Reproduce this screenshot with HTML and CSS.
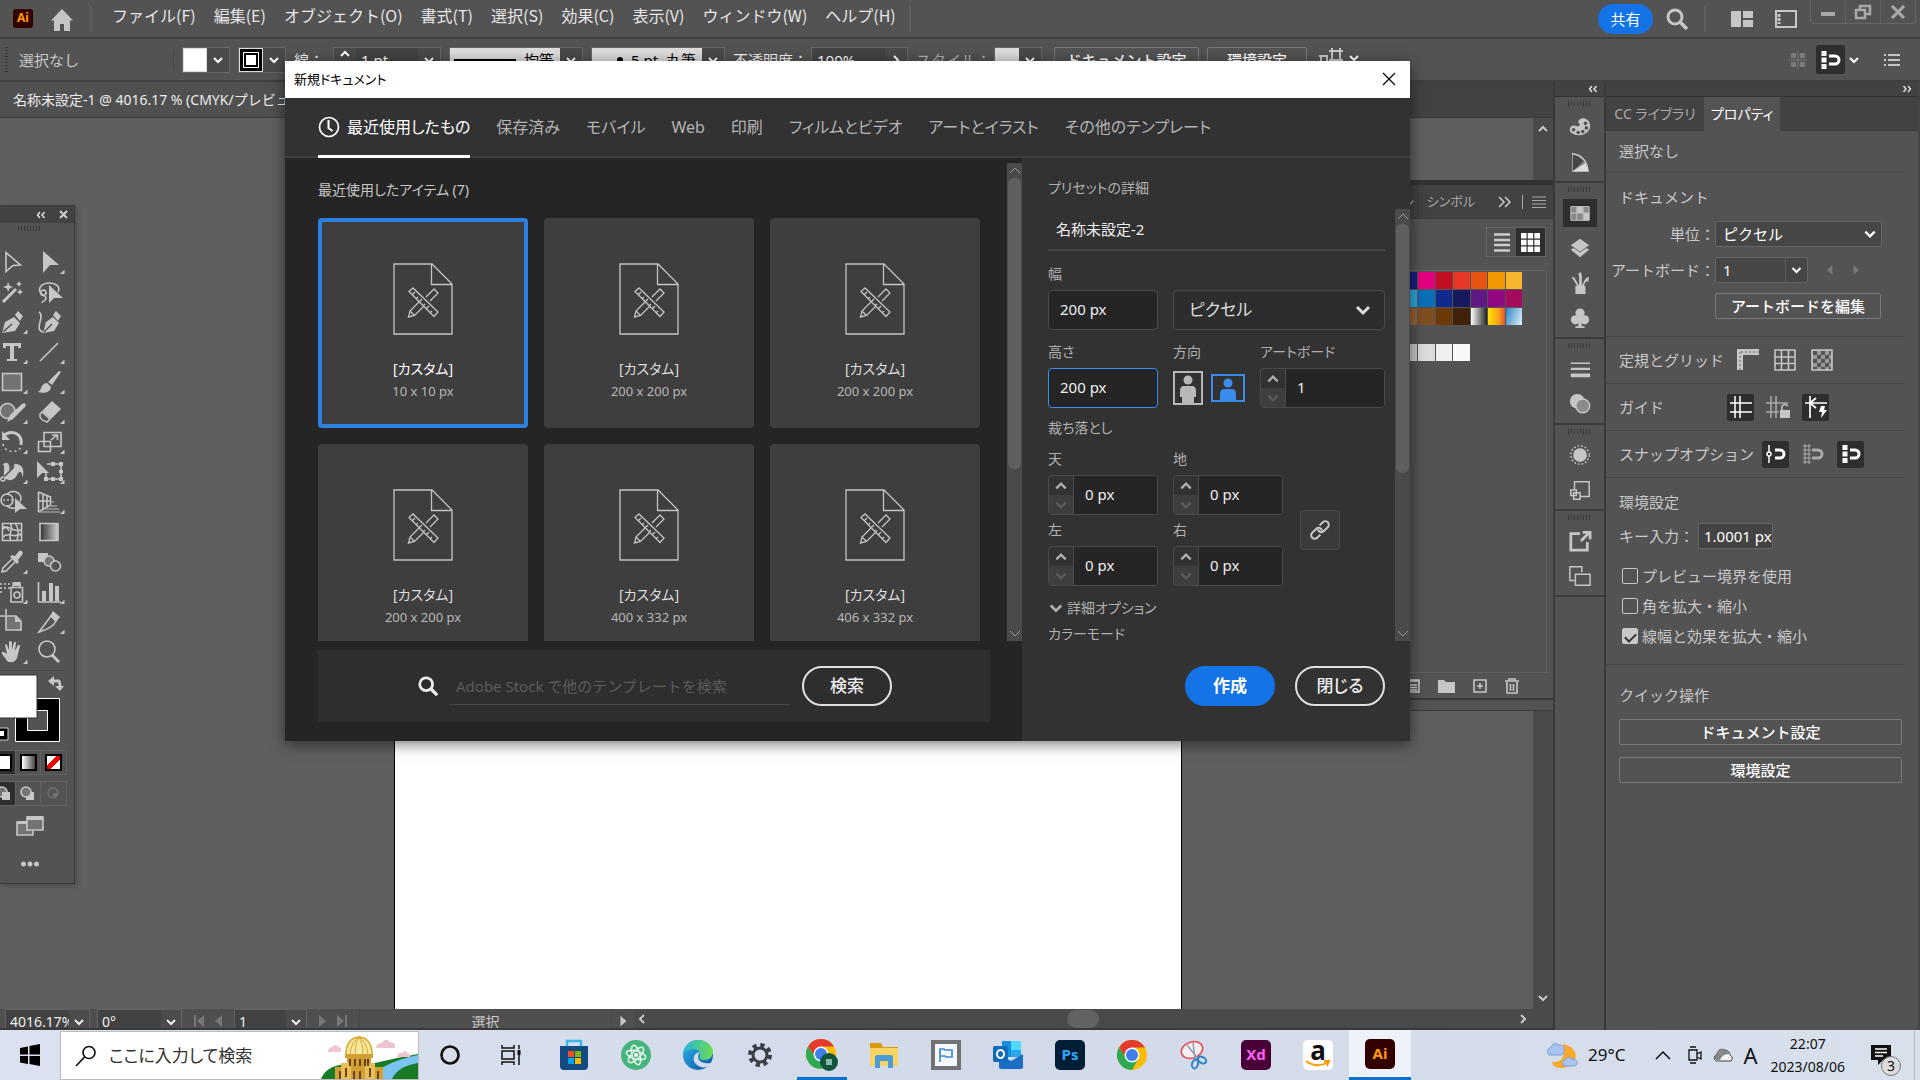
FILE: index.html
```html
<!DOCTYPE html>
<html lang="ja">
<head>
  <meta charset="UTF-8">
  <title>新規ドキュメント</title>
  <link rel="stylesheet" href="styles.css">
</head>
<body>
  <!-- 共通アイコン -->
  <svg class="defs" aria-hidden="true">
    <symbol id="chev" viewBox="0 0 12 12"><path d="M2 4l4 4 4-4" fill="none" stroke="currentColor" stroke-width="2"/></symbol>
    <symbol id="chev-up" viewBox="0 0 12 12"><path d="M2 8l4-4 4 4" fill="none" stroke="currentColor" stroke-width="2"/></symbol>
    <symbol id="thin-up" viewBox="0 0 12 12"><path d="M1 8l5-5 5 5" fill="none" stroke="currentColor"/></symbol>
    <symbol id="thin-down" viewBox="0 0 12 12"><path d="M1 4l5 5 5-5" fill="none" stroke="currentColor"/></symbol>
    <symbol id="prev" viewBox="0 0 10 14"><path d="M8 1v12L1 7z" fill="currentColor"/></symbol>
    <symbol id="next" viewBox="0 0 10 14"><path d="M2 1v12l7-6z" fill="currentColor"/></symbol>
    <symbol id="glass" viewBox="0 0 24 24"><circle cx="10" cy="10" r="7" fill="none" stroke="currentColor" stroke-width="3"/><path d="M15 15l7 7" stroke="currentColor" stroke-width="3.5"/></symbol>
    <symbol id="laquo" viewBox="0 0 10 8"><path d="M4 1L1.500 4 4 7M8.500 1L6 4l2.500 3" fill="none" stroke="currentColor" stroke-width="1.500"/></symbol>
    <symbol id="raquo" viewBox="0 0 10 8"><path d="M1.500 1L4 4 1.500 7M6 1l2.500 3L6 7" fill="none" stroke="currentColor" stroke-width="1.500"/></symbol>
    <symbol id="doc" viewBox="0 0 60 72">
      <g fill="none" stroke="#c4c4c4" stroke-width="1.300">
        <path d="M1 1h38l20 20v50H1zM38.500 1v20.500H59"/>
        <path d="M16 28.500l4-3.500 25 24-4 4.500zM19 32l3-3M23 36l2-2M26 39l3-3M30 43l2-2M33 46l3-3M37 50l2-2"/>
        <path d="M33 34l8-8 4 4-8 8M26 39l-9 9-1.500 6 6-1.500 9-9M17 48l4 4"/>
      </g>
    </symbol>
    <symbol id="chrome" viewBox="0 0 30 30">
      <circle cx="15" cy="15" r="15" fill="#fbbc05"/>
      <path d="M2 7.500A15 15 0 0 1 28 7.500H15L9 18z" fill="#e33b2e"/>
      <path d="M2 7.500A15 15 0 0 0 15 30l6.500-11.500L9 18z" fill="#2da94f"/>
      <circle cx="15" cy="15" r="7.500" fill="#fff"/><circle cx="15" cy="15" r="6" fill="#3f7fe8"/>
    </symbol>
  </svg>

  <header class="menubar">
    <span class="ai-logo">Ai</span>
    <button class="icon-btn home" aria-label="ホーム"><svg width="24" height="24" viewBox="0 0 24 24"><path d="M12 1L1 12.500h3V23h6v-7h4v7h6V12.500h3z" fill="#c6c6c6"/></svg></button>
    <i class="vline"></i>
    <nav class="menus">
      <button>ファイル(F)</button>
      <button>編集(E)</button>
      <button>オブジェクト(O)</button>
      <button>書式(T)</button>
      <button>選択(S)</button>
      <button>効果(C)</button>
      <button>表示(V)</button>
      <button>ウィンドウ(W)</button>
      <button>ヘルプ(H)</button>
    </nav>
    <i class="vline"></i>
    <div class="menubar-right">
      <button class="share">共有</button>
      <button class="icon-btn" aria-label="検索"><svg width="24" height="24"><use href="#glass"/></svg></button>
      <i class="vline"></i>
      <button class="icon-btn arrange" aria-label="ドキュメントの配置"><svg width="22" height="16" viewBox="0 0 22 16" fill="#c6c6c6"><path d="M0 0h10v16H0zM12 0h10v7H12zM12 9h10v7H12z"/></svg></button>
      <button class="icon-btn" aria-label="ワークスペース"><svg width="22" height="18" viewBox="0 0 22 18"><path d="M1 1h20v16H1z" fill="none" stroke="#c6c6c6" stroke-width="2"/><path d="M4 4v10" stroke="#c6c6c6" stroke-width="3" stroke-dasharray="3 1"/></svg></button>
      <div class="win-buttons">
        <button aria-label="最小化"><svg width="16" height="16" viewBox="0 0 16 16"><path d="M1 10h14" stroke="#a9a9a9" stroke-width="4"/></svg></button>
        <button aria-label="元に戻す"><svg width="18" height="16" viewBox="0 0 18 16"><path d="M6 5V2h10v8h-4M2 6h9v8H2z" fill="none" stroke="#a9a9a9" stroke-width="2.500"/></svg></button>
        <button aria-label="閉じる"><svg width="16" height="14" viewBox="0 0 16 14"><path d="M2 1l12 12M14 1L2 13" stroke="#a9a9a9" stroke-width="3"/></svg></button>
      </div>
    </div>
  </header>

  <div class="controlbar">
    <i class="grip-v"></i>
    <span class="sel-state">選択なし</span>
    <div class="swatch-drop"><i class="sw sw-white"></i><button aria-label="塗り"><svg><use href="#chev"/></svg></button></div>
    <div class="swatch-drop"><i class="sw sw-stroke"></i><button aria-label="線"><svg><use href="#chev"/></svg></button></div>
    <label for="strokeW" class="bar-label bright">線：</label>
    <div class="bar-field w-stroke"><button aria-label="増減"><svg><use href="#chev-up"/></svg><svg><use href="#chev"/></svg></button><input id="strokeW" value="1 pt"><button aria-label="線幅"><svg><use href="#chev"/></svg></button></div>
    <div class="bar-field w-brush"><span class="preview"><i class="line"></i>均等</span><button aria-label="プロファイル"><svg><use href="#chev"/></svg></button></div>
    <div class="bar-field w-brush"><span class="preview"><i class="dot"></i>5 pt. 丸筆</span><button aria-label="ブラシ"><svg><use href="#chev"/></svg></button></div>
    <label for="opacity" class="bar-label bright">不透明度：</label>
    <div class="bar-field w-opacity"><input id="opacity" value="100%"><button aria-label="不透明度を選ぶ"><svg class="turn"><use href="#chev"/></svg></button></div>
    <span class="bar-label">スタイル：</span>
    <div class="swatch-drop"><i class="sw sw-grey"></i><button aria-label="スタイル"><svg><use href="#chev"/></svg></button></div>
    <button class="out-btn w-docset">ドキュメント設定</button>
    <button class="out-btn w-pref">環境設定</button>
    <svg class="align-ic" viewBox="0 0 40 26" fill="none" stroke="#c6c6c6" stroke-width="2"><path d="M13 4h8v9h-8zM10 4h3M21 4h3M10 13h3M21 13h3M13 1v3M21 1v3M2 9h6v12M2 9v12M0 9h2"/><path d="M31 9l4 4 4-4" stroke="#fff"/></svg>
    <div class="bar-right">
      <svg width="18" height="18" viewBox="0 0 18 18" fill="#7a7a7a"><path d="M2 2h5v5H2zM11 2h5v5h-5zM2 11h5v5H2zM11 11h5v5h-5zM8.500 0h1v18h-1zM0 8.500h18v1H0z"/></svg>
      <div class="snap-group">
        <button class="dark-ic" aria-label="スナップ"><svg width="20" height="20" viewBox="0 0 20 20"><path d="M3 1v18" stroke="#fff" stroke-width="5" stroke-dasharray="5 1.500"/><path d="M8 6h6a4 4 0 0 1 0 8H8" fill="none" stroke="#fff" stroke-width="3"/></svg></button>
        <svg class="c12"><use href="#chev"/></svg>
      </div>
      <button class="icon-btn" aria-label="パネルメニュー"><svg width="16" height="14" viewBox="0 0 16 14"><path d="M0 2h2M0 7h2M0 12h2M4 2h12M4 7h12M4 12h12" stroke="#c6c6c6" stroke-width="2"/></svg></button>
    </div>
  </div>

  <main class="workspace">
    <section class="doc-area">
      <div class="doc-tabs"><span>名称未設定-1 @ 4016.17 % (CMYK/プレビュー)</span></div>
      <div class="canvas-row">
        <div class="canvas"><div class="artboard"></div></div>
        <div class="canvas-scroll"><svg class="c12"><use href="#chev-up"/></svg><svg class="c12"><use href="#chev"/></svg></div>
      </div>
      <div class="statusbar">
        <div class="st-field w-zoom"><input aria-label="ズーム" value="4016.17%"><button aria-label="ズームを選ぶ"><svg><use href="#chev"/></svg></button></div>
        <div class="st-field w-rot"><input aria-label="回転" value="0°"><button aria-label="回転を選ぶ"><svg><use href="#chev"/></svg></button></div>
        <svg class="nav-ic" viewBox="0 0 34 14" fill="#777"><path d="M3 1h2v12H3zM13 1v12L6 7zM31 1v12l-7-6z"/></svg>
        <div class="st-field w-page"><input aria-label="アートボード番号" value="1"><button aria-label="アートボードを選ぶ"><svg><use href="#chev"/></svg></button></div>
        <svg class="nav-ic" viewBox="0 0 34 14" fill="#777"><path d="M3 1v12l7-6zM21 1v12l7-6zM29 1h2v12h-2z"/></svg>
        <span class="st-tool">選択</span>
        <svg class="st-play"><use href="#next"/></svg>
        <div class="hscroll"><svg class="c12 turn-l"><use href="#chev"/></svg><i></i><svg class="c12 turn"><use href="#chev"/></svg></div>
      </div>

      <aside class="tools">
        <div class="tools-head"><svg width="10" height="8"><use href="#laquo"/></svg><svg width="9" height="9" viewBox="0 0 9 9"><path d="M1 1l7 7M8 1L1 8" stroke="#d0d0d0" stroke-width="2"/></svg></div>
        <i class="grip"></i>
        <div class="tool-grid">
          <button aria-label="選択"><svg viewBox="0 0 28 30"><path d="M6 5.500v19l7-6 7.500-.5z" class="ln"/></svg></button>
          <button aria-label="ダイレクト選択"><svg viewBox="0 0 28 30"><path d="M6 4v22l7-8h9z" class="fl"/><path d="M27.500 22.500V27H23z" class="fl"/></svg></button>
          <button aria-label="自動選択"><svg viewBox="0 0 28 30"><path d="M3 25L16 12" class="ln" stroke-width="3"/><path d="M8 5l1.500 3.500L13 10l-3.500 1.500L8 15l-1-3.500L3 10l4-1.500zM19 4l1 2 2 1-2 1-1 2-1-2-2-1 2-1zM20 12l1 2 2 1-2 1-1 2-1-2-2-1 2-1z" class="fl"/></svg></button>
          <button aria-label="なげなわ"><svg viewBox="0 0 28 30"><path d="M4 17c-4-6 1-11 8-11s12 4 9 9M4 17c1 3 6 1 5-2s-6-2-5 1 5 2 5 5-4 3-4 5" class="ln"/><path d="M12 8v18l5-5h9z" class="fl"/></svg></button>
          <button aria-label="ペン"><svg viewBox="0 0 28 30"><path d="M2 26l3-11 9-5 6 6-5 8zM15 8l3-4 5 5-3 5z" class="fl"/><path d="M3 25l9-8" class="cut"/><path d="M27.500 22.500V27H23z" class="fl"/></svg></button>
          <button aria-label="曲線"><svg viewBox="0 0 28 30"><path d="M2 5c7 4-6 17 4 20" class="ln"/><path d="M6 26l3-11 7-5 6 6-5 8zM16 8l3-4 5 5-3 5z" class="fl"/><path d="M7 25l8-8" class="cut"/></svg></button>
          <button aria-label="文字"><svg viewBox="0 0 28 30"><path d="M3 6h18v5h-3V9h-4v13h3v2H7v-2h3V9H6v2H3z" class="fl"/><path d="M27.500 22.500V27H23z" class="fl"/></svg></button>
          <button aria-label="直線"><svg viewBox="0 0 28 30"><path d="M3 24L21 6" class="ln"/><path d="M27.500 22.500V27H23z" class="fl"/></svg></button>
          <button aria-label="長方形"><svg viewBox="0 0 28 30"><path d="M2.500 6.500h19v17h-19z" class="ln shade"/><path d="M27.500 22.500V27H23z" class="fl"/></svg></button>
          <button aria-label="ブラシ"><svg viewBox="0 0 28 30"><path d="M22 4l2 1-9 13-4-3zM10 16l4 4c0 5-7 7-13 5 4-2 3-9 9-9z" class="fl"/><path d="M27.500 22.500V27H23z" class="fl"/></svg></button>
          <button aria-label="Shaper"><svg viewBox="0 0 28 30"><circle cx="7.500" cy="14" r="7.500" class="ln shade"/><path d="M7 25l3-7L22 7c3-2 5 1 3 3L13 22z" class="fl"/><path d="M27.500 22.500V27H23z" class="fl"/></svg></button>
          <button aria-label="消しゴム"><svg viewBox="0 0 28 30"><path d="M15 4l9 8-10 10-9-8z" class="fl"/><path d="M5 15l8 7-3 3q-8-2-7-8z" class="ln"/><path d="M27.500 22.500V27H23z" class="fl"/></svg></button>
          <button aria-label="回転"><svg viewBox="0 0 28 30"><path d="M3 9c8-7 20-3 18 9" class="ln" stroke-width="3"/><path d="M2 4v9h8z" class="fl"/><path d="M3 17c2 9 14 10 18 3" class="ln" stroke-dasharray="2 3"/><path d="M27.500 22.500V27H23z" class="fl"/></svg></button>
          <button aria-label="拡大・縮小"><svg viewBox="0 0 28 30"><path d="M7 5.500h17v14H7zM1.500 14.500h12v10h-12zM14 13l6-5M15 8h5.500v5" class="ln"/><path d="M27.500 22.500V27H23z" class="fl"/></svg></button>
          <button aria-label="線幅"><svg viewBox="0 0 28 30"><path d="M3 7c7-5 7 5 6 9 4-6 8-11 12-7 3 3 3 8 1 12 1-7-3-8-5-3s-8 7-12 3c-3-3 1-9-2-14z" class="fl"/><path d="M2 22l13-13" class="cut"/><circle cx="3" cy="22" r="2" class="ln"/><circle cx="16" cy="9" r="1.500" class="ln"/><path d="M27.500 22.500V27H23z" class="fl"/></svg></button>
          <button aria-label="自由変形"><svg viewBox="0 0 28 30"><path d="M10 7h14v15H9v-6" class="ln"/><path d="M0 4v17l5-5h7zM14 5h4v4h-4zM22 5h4v4h-4zM22 13h4v3h-4zM22 20h4v4h-4zM14 20h4v4h-4zM7 20h4v4H7z" class="fl"/><path d="M27.500 22.500V27H23z" class="fl"/></svg></button>
          <button aria-label="シェイプ形成"><svg viewBox="0 0 28 30"><circle cx="7" cy="13" r="6" class="ln"/><path d="M7 7c7-6 17 0 13 8M7 19q4 3 8 2" class="ln"/><path d="M3 13h12" class="ln" stroke-dasharray="2 2"/><path d="M15 11v15l5-4h7z" class="fl"/></svg></button>
          <button aria-label="遠近グリッド"><svg viewBox="0 0 28 30"><path d="M1.500 5v20M1.500 5l12 5v8l-12 7M6 7v15M10 8.500v11M1.500 14h12" class="ln"/><path d="M14 15h3M12 19h8M7 22h15M2 25h21" class="ln dim"/><path d="M27.500 22.500V27H23z" class="fl"/></svg></button>
          <button aria-label="メッシュ"><svg viewBox="0 0 28 30"><path d="M2.500 6.500h19v17h-19zM10 6c5 6-3 10 1 18M3 12c6-6 8 4 18 1M3 20c6-6 10 2 18-3M15 6c5 6 3 12 2 18M3 10q4-1 6 4" class="ln"/></svg></button>
          <button aria-label="グラデーション"><svg viewBox="0 0 28 30"><defs><linearGradient id="g1"><stop stop-color="#333"/><stop offset="1" stop-color="#ccc"/></linearGradient></defs><path d="M3 6.500h18v17H3z" fill="url(#g1)" stroke="#c6c6c6" stroke-width="1.600"/></svg></button>
          <button aria-label="スポイト"><svg viewBox="0 0 28 30"><path d="M15 9l4-5c3-1 5 2 3 4l-4 5 1 2-2 2-7-7 2-2z" class="fl"/><path d="M12 12l-9 9-1 4 4-1 9-9" class="ln"/><path d="M27.500 22.500V27H23z" class="fl"/></svg></button>
          <button aria-label="ブレンド"><svg viewBox="0 0 28 30"><path d="M1 6h10v9H1z" class="fl"/><circle cx="12" cy="14" r="5" class="ln shade"/><circle cx="18.500" cy="19" r="5" class="ln solid"/></svg></button>
          <button aria-label="シンボルスプレー"><svg viewBox="0 0 28 30"><path d="M0 7h10M0 11h10M0 15h4" class="ln" stroke-dasharray="2 2"/><path d="M11 10.500h11.500V25H11zM13 10V6h7v4" class="ln"/><path d="M14 5h6v4h-6z" class="fl"/><circle cx="17" cy="18" r="3" class="ln"/><path d="M27.500 22.500V27H23z" class="fl"/></svg></button>
          <button aria-label="グラフ"><svg viewBox="0 0 28 30"><path d="M1.500 5v20H24" class="ln"/><path d="M5 14h4v10H5zM12 6h4v18h-4zM18 9h4v15h-4z" class="fl"/><path d="M27.500 22.500V27H23z" class="fl"/></svg></button>
          <button aria-label="アートボード"><svg viewBox="0 0 28 30"><path d="M0 9h5M6 2v6M6 9h10l5 5v9H6z" class="ln shade"/><path d="M15 9v6h6z" class="fl"/></svg></button>
          <button aria-label="スライス"><svg viewBox="0 0 28 30"><path d="M2 25L14 9l5 5q-3 7-17 11z" class="ln"/><path d="M16 4l7 6-4 5-6-6z" class="fl"/><path d="M27.500 22.500V27H23z" class="fl"/></svg></button>
          <button aria-label="手のひら"><svg viewBox="0 0 28 30"><path d="M8 25L2 17q-1-3 2-2l3 2L5 8q1-2 2 0l2 5V5q1-2 3 0v8l2-8q2-1 2 1l-1 8 3-6q2-1 2 1l-3 12q-2 5-7 4z" class="fl"/><path d="M27.500 22.500V27H23z" class="fl"/></svg></button>
          <button aria-label="ズーム"><svg viewBox="0 0 28 30"><circle cx="10" cy="12" r="8" class="ln"/><path d="M15 18l7 7" class="ln" stroke-width="3"/></svg></button>
        </div>
        <div class="fill-stroke">
          <svg width="66" height="72" viewBox="0 0 66 72">
            <path d="M52 7h7q1 0 1 7" fill="none" stroke="#c6c6c6" stroke-width="3"/><path d="M48 7l6-5v10zM55 12h9l-4 5z" fill="#c6c6c6"/>
            <path d="M15.500 24.500h44v43h-44z" stroke="#fff" fill="#000"/><path d="M27.500 36.500h20v20h-20z" stroke="#fff" fill="#535353"/>
            <path d="M-1 1h38v43H-1z" fill="#fff" stroke="#333"/>
            <path d="M-1 54h9v12H-1z" fill="#000" stroke="#ccc"/><path d="M0 57h4v5H0z" fill="#fff"/>
          </svg>
        </div>
        <div class="mode-row">
          <button class="on" aria-label="カラー"><i class="chip"></i></button><button aria-label="グラデーション塗り"><i class="chip grad"></i></button><button aria-label="なし"><i class="chip none"></i></button>
        </div>
        <div class="mode-row draw">
          <button class="on" aria-label="標準描画"><svg width="16" height="16" viewBox="0 0 16 16"><circle cx="6" cy="6" r="5" class="ln shade"/><path d="M6 6h8v8H6z" class="fl"/></svg></button>
          <button aria-label="背面描画"><svg width="16" height="16" viewBox="0 0 16 16"><path d="M6 6h8v8H6z" class="fl"/><circle cx="6" cy="6" r="5" class="ln shade"/></svg></button>
          <button aria-label="内側描画"><svg width="16" height="16" viewBox="0 0 16 16"><circle cx="7" cy="7" r="5" fill="none" stroke="#707070" stroke-width="1.500"/><path d="M7 7h5q0 5-5 5z" fill="#707070"/></svg></button>
        </div>
        <button class="screen-mode" aria-label="スクリーンモード"><svg width="28" height="20" viewBox="0 0 28 20"><path d="M1 6h16v13H1z" class="ln shade"/><path d="M1 5h16v3H1z" class="fl"/><path d="M11 1h16v13H11z" class="ln shade"/><path d="M11 0h16v4H11z" class="fl"/></svg></button>
        <button class="more" aria-label="ツールバーを編集"><svg width="18" height="6" viewBox="0 0 18 6" fill="#c6c6c6"><circle cx="2.500" cy="3" r="2.500"/><circle cx="9" cy="3" r="2.500"/><circle cx="15.500" cy="3" r="2.500"/></svg></button>
      </aside>

      <aside class="swatches">
        <div class="sw-tabs"><span>シ</span><span class="cut-tab">シンボル</span><svg width="20" height="14" viewBox="0 0 20 14"><path d="M4 2l5 5-5 5M10 2l5 5-5 5" fill="none" stroke="#ccc" stroke-width="1.500"/></svg><i></i><svg width="14" height="12" viewBox="0 0 14 12"><path d="M0 1h14M0 4.500h14M0 8h14M0 11.500h14" stroke="#aaa"/></svg></div>
        <div class="sw-view">
          <button aria-label="リスト表示"><svg width="16" height="19" viewBox="0 0 16 19"><path d="M0 1.500h16M0 7h16M0 12h16M0 17.500h16" stroke="#ccc" stroke-width="2.500"/></svg></button><button class="on" aria-label="サムネール表示"><svg width="19" height="19" viewBox="0 0 19 19" fill="#fff"><path d="M0 0h5.500v5.500H0zM6.700 0h5.500v5.500H6.700zM13.400 0H19v5.500h-5.600zM0 6.700h5.500v5.500H0zM6.700 6.700h5.500v5.500H6.700zM13.400 6.700H19v5.500h-5.600zM0 13.400h5.500V19H0zM6.700 13.400h5.500V19H6.700zM13.400 13.400H19V19h-5.600z"/></svg></button>
        </div>
        <div class="sw-list">
          <div class="sw-grid">
            <i class="c-navy"></i><i class="c-navy"></i><i class="c-magenta"></i><i class="c-red"></i><i class="c-vermilion"></i><i class="c-orange"></i><i class="c-amber"></i><i class="c-yellow"></i>
            <i class="c-cyan"></i><i class="c-cyan"></i><i class="c-blue"></i><i class="c-royal"></i><i class="c-indigo"></i><i class="c-violet"></i><i class="c-purple"></i><i class="c-wine"></i>
            <i class="c-tan"></i><i class="c-tan"></i><i class="c-brown"></i><i class="c-umber"></i><i class="c-cocoa"></i><i class="c-bw"></i><i class="c-fire"></i><i class="c-sky"></i>
          </div>
          <div class="sw-grid greys"><i class="c-g1"></i><i class="c-g1"></i><i class="c-g2"></i><i class="c-g3"></i><i class="c-g4"></i></div>
        </div>
        <div class="sw-foot">
          <svg width="14" height="14" viewBox="0 0 14 14"><path d="M0 1h13v12H0z" class="ln"/><path d="M0 2h13M3 6h8M3 8.500h8M3 11h8" class="ln"/></svg>
          <svg width="17" height="14" viewBox="0 0 17 14"><path d="M0 1h6l2 2h9v11H0z" class="fl"/></svg>
          <svg width="14" height="14" viewBox="0 0 14 14"><path d="M1 1h12v12H1zM4 7h6M7 4v6" class="ln"/></svg>
          <svg width="14" height="16" viewBox="0 0 14 16"><path d="M0 3h14M4 3V1h6v2M2 4v11h10V4M5.500 6v7M8.500 6v7" class="ln"/></svg>
        </div>
      </aside>
    </section>

    <aside class="dock">
      <div class="dock-top"><svg width="10" height="8"><use href="#laquo"/></svg></div>
      <div class="dock-group"><i class="grip"></i>
        <button aria-label="カラー"><svg viewBox="0 0 24 24"><path d="M13 3c6-2 10 3 10 8 0 6-6 10-12 10S0 18 1 14s4-4 7-3 5-1 3-3 0-4 2-5z" class="fl"/><g fill="#535353"><circle cx="5" cy="15" r="2"/><circle cx="10" cy="18" r="2"/><circle cx="15" cy="17" r="2"/><circle cx="19" cy="13" r="2"/><circle cx="18" cy="8" r="2"/></g></svg></button>
        <button aria-label="カラーガイド"><svg viewBox="0 0 24 24"><path d="M4 3q15 2 17 19H4z" fill="#888" stroke="#c6c6c6" stroke-width="1.500"/><path d="M4 22V4l6 2zM4 22l6-16 6 5z" fill="#444"/><path d="M4 22l14-9 3 9z" fill="#ddd"/></svg></button>
      </div>
      <div class="dock-group"><i class="grip"></i>
        <button class="on" aria-label="スウォッチ"><svg viewBox="0 0 24 24"><path d="M2 5h20v15H2z" fill="#888"/><path d="M9 5h6v7H9zM16 12h6v8h-6z" fill="#c6c6c6"/><path d="M2 5h20v15H2zM2 12h20M8.500 5v15M15.500 5v15" fill="none" stroke="#c6c6c6"/></svg></button>
        <button aria-label="レイヤー"><svg viewBox="0 0 24 24"><path d="M12 2l10 7-10 7L2 9zM2 14l3-2 7 5 7-5 3 2-10 8z" class="fl"/></svg></button>
        <button aria-label="ブラシ"><svg viewBox="0 0 24 24"><path d="M7 15h11v9H7zM9 15L3 6q2-2 4 2l4 7M11 15V4l-1-2 3-2 1 4v11M14 15l3-6q2-4 5-3l-1 4-3 1-2 4" class="fl"/></svg></button>
        <button aria-label="シンボル"><svg viewBox="0 0 24 24"><g class="fl"><circle cx="12" cy="6.500" r="5"/><circle cx="7" cy="14" r="5"/><circle cx="17" cy="14" r="5"/><path d="M11 10h2l1 11h3v2H7v-2h3z"/></g></svg></button>
      </div>
      <div class="dock-group"><i class="grip"></i>
        <button aria-label="線"><svg viewBox="0 0 24 24"><path d="M2 5h21v1.500H2zM2 10.500h21v2.500H2zM2 17h21v4H2z" class="fl"/></svg></button>
        <button aria-label="透明"><svg viewBox="0 0 24 24"><circle cx="9" cy="9" r="8" class="fl"/><circle cx="15" cy="14" r="7.500" fill="#8a8a8a" stroke="#c6c6c6" stroke-width="1.500"/></svg></button>
      </div>
      <div class="dock-group"><i class="grip"></i>
        <button aria-label="アピアランス"><svg viewBox="0 0 24 24"><circle cx="12" cy="12" r="7.500" class="fl"/><circle cx="12" cy="12" r="10" fill="none" stroke="#c6c6c6" stroke-width="1.500" stroke-dasharray="2 2"/></svg></button>
        <button aria-label="グラフィックスタイル"><svg viewBox="0 0 24 24"><path d="M6 11V3h16v16h-9M2 12h6v6H2zM5 15h7v7H5z" class="ln"/></svg></button>
      </div>
      <div class="dock-group"><i class="grip"></i>
        <button aria-label="アセットの書き出し"><svg viewBox="0 0 24 24"><path d="M12 4H2v18h18V13M13 12l9-9M15 2.500h8V10" fill="none" stroke="#c6c6c6" stroke-width="3"/></svg></button>
        <button aria-label="アートボード"><svg viewBox="0 0 24 24"><path d="M6 17H1V2h13v6M7 10h16v12H7z" class="ln"/></svg></button>
      </div>
    </aside>

    <aside class="props">
      <div class="props-top"><svg width="10" height="8"><use href="#raquo"/></svg></div>
      <div class="props-tabs"><button>CC ライブラリ</button><button class="on">プロパティ</button></div>
      <div class="props-row r-state">選択なし</div>
      <section class="props-doc">
        <h3>ドキュメント</h3>
        <div class="form-row">
          <label for="unit">単位：</label>
          <span class="select w-unit"><select id="unit"><option>ピクセル</option></select><svg><use href="#chev"/></svg></span>
        </div>
        <div class="form-row">
          <label for="board">アートボード：</label>
          <span class="select w-board"><select id="board"><option>1</option></select><svg><use href="#chev"/></svg></span>
          <svg class="step"><use href="#prev"/></svg><svg class="step"><use href="#next"/></svg>
        </div>
        <div class="form-row"><span class="lab"></span><button class="out-btn w-edit">アートボードを編集</button></div>
      </section>
      <div class="props-row rulers"><span>定規とグリッド</span>
        <svg width="22" height="22" viewBox="0 0 22 22"><path d="M0 0h22v6H6v15H0z" class="fl"/><path d="M3 3v18M4 3h18" stroke="#666" stroke-dasharray="2 2" fill="none"/></svg>
        <svg width="22" height="22" viewBox="0 0 22 22"><path d="M1 1h20v20H1zM1 8h20M1 14.500h20M7.500 1v20M14.500 1v20" class="ln"/></svg>
        <svg width="22" height="22" viewBox="0 0 22 22"><path d="M1 1h20v20H1z" fill="#999"/><path d="M2 4h18M2 12h18M2 20h18" stroke="#555" stroke-width="4" stroke-dasharray="4 4"/><path d="M6 8h14M6 16h14" stroke="#555" stroke-width="4" stroke-dasharray="4 4"/><path d="M1 1h20v20H1z" class="ln"/></svg>
      </div>
      <div class="props-row guides"><span>ガイド</span>
        <button class="dark-ic sm" aria-label="ガイドを表示"><svg width="22" height="22" viewBox="0 0 22 22"><path d="M5 0v22M10 0v22M0 7h22M0 16h22" stroke="#fff" stroke-width="1.500"/></svg></button>
        <button class="plain-ic" aria-label="ガイドをロック"><svg width="24" height="22" viewBox="0 0 24 22"><path d="M5 0v22M10 0v22M0 7h22M0 16h13" stroke="#aaa" stroke-width="1.500"/><path d="M14 14h10v8H14z" fill="#c6c6c6"/><path d="M16 14v-4q3-3 6 0" fill="none" stroke="#c6c6c6" stroke-width="1.500"/></svg></button>
        <button class="dark-ic sm" aria-label="スマートガイド"><svg width="22" height="22" viewBox="0 0 22 22"><path d="M5 0v22M0 7h22M5 7l6-5M5 7l6 5" stroke="#fff" stroke-width="1.700"/><path d="M16 10h4l-1 4h3l-6 8 1-6h-3z" fill="#fff"/></svg></button>
      </div>
      <div class="props-row snaps"><span>スナップオプション</span>
        <button class="dark-ic sm" aria-label="ポイントにスナップ"><svg width="22" height="20" viewBox="0 0 22 20" fill="none" stroke="#fff"><path d="M4 1v18" stroke-width="1.500"/><circle cx="4" cy="10" r="2" fill="#333" stroke-width="1.500"/><path d="M10 6h5a4 4 0 0 1 0 8h-5" stroke-width="3"/></svg></button>
        <button class="plain-ic" aria-label="グリッドにスナップ"><svg width="22" height="20" viewBox="0 0 22 20" fill="none" stroke="#aaa"><path d="M3 0v20M7 0v20M1 2h8M1 6h8M1 10h8M1 14h8M1 18h8"/><path d="M10 6h6a4 4 0 0 1 0 8h-6" stroke-width="3"/></svg></button>
        <button class="dark-ic sm" aria-label="ピクセルにスナップ"><svg width="20" height="20" viewBox="0 0 20 20"><path d="M4 1v18" stroke="#fff" stroke-width="5" stroke-dasharray="5 1.500"/><path d="M9 6h5a4 4 0 0 1 0 8H9" fill="none" stroke="#fff" stroke-width="3"/></svg></button>
      </div>
      <section class="props-pref">
        <h3>環境設定</h3>
        <div class="key-row"><label for="key">キー入力：</label><input id="key" value="1.0001 px"></div>
        <label class="check"><input type="checkbox">プレビュー境界を使用</label>
        <label class="check"><input type="checkbox">角を拡大・縮小</label>
        <label class="check"><input type="checkbox" checked>線幅と効果を拡大・縮小</label>
      </section>
      <section class="props-quick">
        <h3>クイック操作</h3>
        <button class="out-btn">ドキュメント設定</button>
        <button class="out-btn">環境設定</button>
      </section>
    </aside>
  </main>

  <!-- 新規ドキュメント ダイアログ -->
  <div class="dialog" role="dialog" aria-labelledby="dlgTitle">
    <div class="dlg-title"><span id="dlgTitle">新規ドキュメント</span><button aria-label="ダイアログを閉じる"><svg width="14" height="14" viewBox="0 0 14 14"><path d="M1 1l12 12M13 1L1 13" stroke="#000" stroke-width="1.200"/></svg></button></div>
    <nav class="dlg-tabs">
      <button class="on"><svg width="22" height="22" viewBox="0 0 22 22"><circle cx="11" cy="11" r="9.500" fill="none" stroke="#fff" stroke-width="1.700"/><path d="M10.500 4v8l4 3" fill="none" stroke="#fff" stroke-width="2"/></svg>最近使用したもの</button>
      <button>保存済み</button>
      <button>モバイル</button>
      <button>Web</button>
      <button>印刷</button>
      <button>フィルムとビデオ</button>
      <button>アートとイラスト</button>
      <button>その他のテンプレート</button>
    </nav>
    <div class="dlg-body">
      <div class="recent">
        <div class="recent-scroll">
          <div class="recent-main">
            <h2>最近使用したアイテム (7)</h2>
            <div class="cards">
              <button class="card on"><svg><use href="#doc"/></svg><b>[カスタム]</b><span>10 x 10 px</span></button>
              <button class="card"><svg><use href="#doc"/></svg><b>[カスタム]</b><span>200 x 200 px</span></button>
              <button class="card"><svg><use href="#doc"/></svg><b>[カスタム]</b><span>200 x 200 px</span></button>
              <button class="card"><svg><use href="#doc"/></svg><b>[カスタム]</b><span>200 x 200 px</span></button>
              <button class="card"><svg><use href="#doc"/></svg><b>[カスタム]</b><span>400 x 332 px</span></button>
              <button class="card"><svg><use href="#doc"/></svg><b>[カスタム]</b><span>406 x 332 px</span></button>
            </div>
          </div>
          <div class="vscroll"><svg class="c12"><use href="#thin-up"/></svg><i class="thumb-l"></i><svg class="c12"><use href="#thin-down"/></svg></div>
        </div>
        <form class="stock">
          <svg width="22" height="22"><use href="#glass"/></svg>
          <input aria-label="Adobe Stock を検索" placeholder="Adobe Stock で他のテンプレートを検索">
          <button type="button" class="pill">検索</button>
        </form>
      </div>
      <div class="preset">
        <h2>プリセットの詳細</h2>
        <div class="preset-scroll">
          <div class="fields">
            <input class="doc-name" aria-label="名前" value="名称未設定-2">
            <label class="fl-label" for="w">幅</label>
            <div class="frow">
              <input id="w" class="box" value="200 px">
              <span class="select dlg-select"><select aria-label="単位"><option>ピクセル</option></select><svg><use href="#chev"/></svg></span>
            </div>
            <div class="frow three">
              <div><label class="fl-label" for="h">高さ</label><input id="h" class="box focus" value="200 px"></div>
              <div><span class="fl-label">方向</span>
                <div class="orient">
                  <button aria-label="縦向き"><svg width="30" height="34" viewBox="0 0 30 34"><path d="M1 1h28v32H1z" fill="#323232" stroke="#b8b8b8" stroke-width="2"/><circle cx="15" cy="9" r="4.500" fill="#b8b8b8"/><path d="M7 20q0-5 4-5h8q4 0 4 5v6h-2v7H9v-7H7z" fill="#b8b8b8"/></svg></button>
                  <button aria-label="横向き"><svg width="34" height="28" viewBox="0 0 34 28"><path d="M1 1h32v26H1z" fill="#323232" stroke="#3b8ded" stroke-width="2"/><circle cx="17" cy="9" r="4.500" fill="#3b8ded"/><path d="M9 27v-7q0-5 5-5h6q5 0 5 5v7z" fill="#3b8ded"/></svg></button>
                </div>
              </div>
              <div><label class="fl-label" for="n">アートボード</label><div class="spin wide"><span><button aria-label="増やす"><svg><use href="#chev-up"/></svg></button><button disabled aria-label="減らす"><svg><use href="#chev"/></svg></button></span><input id="n" value="1"></div></div>
            </div>
            <h4>裁ち落とし</h4>
            <div class="bleed">
              <div class="bleed-grid">
                <div><label class="fl-label" for="b1">天</label><div class="spin"><span><button aria-label="増やす"><svg><use href="#chev-up"/></svg></button><button disabled aria-label="減らす"><svg><use href="#chev"/></svg></button></span><input id="b1" value="0 px"></div></div>
                <div><label class="fl-label" for="b2">地</label><div class="spin"><span><button aria-label="増やす"><svg><use href="#chev-up"/></svg></button><button disabled aria-label="減らす"><svg><use href="#chev"/></svg></button></span><input id="b2" value="0 px"></div></div>
                <div><label class="fl-label" for="b3">左</label><div class="spin"><span><button aria-label="増やす"><svg><use href="#chev-up"/></svg></button><button disabled aria-label="減らす"><svg><use href="#chev"/></svg></button></span><input id="b3" value="0 px"></div></div>
                <div><label class="fl-label" for="b4">右</label><div class="spin"><span><button aria-label="増やす"><svg><use href="#chev-up"/></svg></button><button disabled aria-label="減らす"><svg><use href="#chev"/></svg></button></span><input id="b4" value="0 px"></div></div>
              </div>
              <button class="link" aria-label="リンク"><svg width="24" height="24" viewBox="0 0 24 24" fill="none" stroke="#c8c8c8" stroke-width="2"><g transform="rotate(-45 12 12)"><path d="M9 15.500H4.500a3.500 3.500 0 0 1 0-7H10a3.500 3.500 0 0 1 3 5.500"/><path d="M15 8.500h4.500a3.500 3.500 0 0 1 0 7H14a3.500 3.500 0 0 1-3-5.500"/></g></svg></button>
            </div>
            <button class="advanced"><svg><use href="#chev"/></svg>詳細オプション</button>
            <div class="fl-label">カラーモード</div>
          </div>
          <div class="vscroll"><svg class="c12"><use href="#thin-up"/></svg><i class="thumb-r"></i><svg class="c12"><use href="#thin-down"/></svg></div>
        </div>
        <div class="dlg-foot"><button class="pill primary">作成</button><button class="pill">閉じる</button></div>
      </div>
    </div>
  </div>

  <footer class="taskbar">
    <button class="start" aria-label="スタート"><svg width="22" height="22" viewBox="0 0 22 22"><path d="M1 4l8-1.500v8H1zM10.500 2L21 0v10.500H10.500zM1 12h8v8l-8-1.500zM10.500 12H21v10l-10.500-2z"/></svg></button>
    <label class="tsearch">
      <svg width="22" height="22" viewBox="0 0 22 22"><circle cx="14" cy="7.500" r="6" fill="none" stroke="#111" stroke-width="1.700"/><path d="M9.500 12L1 21" stroke="#111" stroke-width="1.700"/></svg>
      <input placeholder="ここに入力して検索">
      <svg class="dome" width="97" height="44" viewBox="0 0 97 44">
        <path d="M0 44q5-13 24-15l30-1q20-5 43-9v25z" fill="#187a24"/><path d="M48 44q14-17 49-24v8q-20 3-26 16z" fill="#7cc4f0"/>
        <path d="M55 13q0-5 6-5 3-6 8-1 6 0 5 6zM7 17q0-5 5-5 3-4 5 0 4 0 3 5zM76 22q1-5 5-4 4-4 5 0 4 0 3 4z" fill="#ecc5d0"/>
        <path d="M25 20q0-17 13-18 13 1 13 18z" fill="#f7e8a0" stroke="#d9a72c" stroke-width="1.500"/><path d="M29 20q1-13 9-18 8 5 9 18M34 20q0-12 4-18 4 6 4 18" fill="none" stroke="#d9a72c"/>
        <path d="M24 19h28v4H24zM26 23h24v10H26zM14 32h48v12H14z" fill="#d2a032"/><path d="M20 28h10v16H20zM44 28h10v16H44z" fill="#e8bf57"/><path d="M29 24v7M34 24v7M39 24v7M44 24v7M47 24v7M19 36v8M25 33v9M33 36v8M39 36v8M49 33v9M57 36v8" stroke="#6a4212" stroke-width="2"/>
      </svg>
    </label>
    <nav class="apps">
      <button aria-label="Cortana"><svg width="22" height="22" viewBox="0 0 22 22"><circle cx="11" cy="11" r="8.500" fill="none" stroke="#111" stroke-width="2.700"/></svg></button>
      <button aria-label="タスクビュー"><svg width="22" height="20" viewBox="0 0 22 20" fill="none" stroke="#111" stroke-width="1.500"><path d="M1 6h12v8H1zM1 0v3h12V0M1 20v-3h12v3M18 0v4M18 9v11"/><path d="M18 5v5" stroke-width="3"/></svg></button>
      <button aria-label="Microsoft Store"><svg width="30" height="32" viewBox="0 0 30 32"><path d="M1 7h28v20q0 4-4 4H5q-4 0-4-4z" fill="#144a82"/><path d="M8 7V2h14v5" fill="none" stroke="#38b6e8" stroke-width="2.500"/><path d="M9 12h6v6H9z" fill="#f25022"/><path d="M16 12h6v6h-6z" fill="#7fba00"/><path d="M9 19h6v6H9z" fill="#00a4ef"/><path d="M16 19h6v6h-6z" fill="#ffb900"/></svg></button>
      <button aria-label="Atom"><svg width="30" height="30" viewBox="0 0 30 30"><circle cx="15" cy="15" r="15" fill="#46b57d"/><g fill="none" stroke="#e4f7e9" stroke-width="1.500"><ellipse cx="15" cy="15" rx="10" ry="4" transform="rotate(15 15 15)"/><ellipse cx="15" cy="15" rx="10" ry="4" transform="rotate(75 15 15)"/><ellipse cx="15" cy="15" rx="10" ry="4" transform="rotate(135 15 15)"/></g><circle cx="15" cy="15" r="2" fill="#fff"/></svg></button>
      <button aria-label="Edge"><svg width="30" height="30" viewBox="0 0 30 30"><defs><linearGradient id="eg" y2="1"><stop stop-color="#2bb5e8"/><stop offset="1" stop-color="#0b53a8"/></linearGradient><linearGradient id="eg2"><stop stop-color="#25b4dc"/><stop offset="1" stop-color="#6bdc50"/></linearGradient></defs><circle cx="15" cy="15" r="15" fill="url(#eg)"/><path d="M0 13C2 4 8 0 15 0c9 0 15 6 15 12 0 5-4 8-9 8-4 0-5-2-4-4 2-8-10-9-17-3z" fill="url(#eg2)"/><path d="M17 12c-5 6 0 13 11 11 1 0 1 0 0 1-4 5-11 4-15 0s-3-11 4-12z" fill="#d5dcea"/></svg></button>
      <button aria-label="設定"><svg width="26" height="26" viewBox="0 0 26 26"><circle cx="13" cy="13" r="9.500" fill="none" stroke="#3a3f48" stroke-width="5" stroke-dasharray="4 3.460"/><circle cx="13" cy="13" r="7" fill="none" stroke="#3a3f48" stroke-width="3"/></svg></button>
      <button class="run" aria-label="Chrome プロファイル"><svg width="32" height="32" viewBox="0 0 32 32"><use href="#chrome" width="30" height="30"/><circle cx="23" cy="23" r="9" fill="#10563f"/><path d="M20 20h6v6h-6z" fill="#8fb5a5"/></svg></button>
      <button aria-label="エクスプローラー"><svg width="28" height="26" viewBox="0 0 28 26"><path d="M0 3V1h11l2 4h15v19H0z" fill="#d99a12"/><path d="M0 6h28v18H0z" fill="#fcd462"/><path d="M5 26V15q0-2 2-2h14q2 0 2 2v11h-5v-7h-8v7z" fill="#4a9bd8"/></svg></button>
      <button aria-label="フラグ"><svg width="30" height="30" viewBox="0 0 30 30"><path d="M2 2h26v26H2z" fill="#f4f7fc" stroke="#727272" stroke-width="4"/><path d="M9 22V9h4l1 1h7v7h-6l-1-1H9" fill="none" stroke="#3d8bd9" stroke-width="1.700"/></svg></button>
      <button aria-label="Outlook"><svg width="30" height="30" viewBox="0 0 30 30"><path d="M9 1h19v16H9z" fill="#1490df"/><path d="M18 1h10v9H18z" fill="#50d9ff"/><path d="M18 10h10v7H18z" fill="#28a8ea"/><path d="M6 14l12 7 12-7v13q0 2-2 2H8q-2 0-2-2z" fill="#1a6fc4"/><rect y="6" width="15" height="16" rx="2" fill="#0f6cbd"/><ellipse cx="7.500" cy="14" rx="3.500" ry="4" fill="none" stroke="#fff" stroke-width="2"/></svg></button>
      <button aria-label="Photoshop"><span class="sq ps">Ps</span></button>
      <button aria-label="Chrome"><svg width="30" height="30"><use href="#chrome"/></svg></button>
      <button aria-label="Snipping Tool"><svg width="30" height="30" viewBox="0 0 30 30" fill="none"><ellipse cx="13" cy="10" rx="11" ry="8" fill="#f4f1f4" stroke="#e0565e" stroke-width="1.700" transform="rotate(-20 13 10)"/><path d="M8 5l12 15M14 3l2 17" stroke="#99a" stroke-width="1.500"/><ellipse cx="16" cy="24" rx="3" ry="4.500" stroke="#2d82c8" stroke-width="2" transform="rotate(15 16 24)"/><ellipse cx="23" cy="20" rx="3" ry="4.500" stroke="#2d82c8" stroke-width="2" transform="rotate(-60 23 20)"/></svg></button>
      <button aria-label="Xd"><span class="sq xd">Xd</span></button>
      <button aria-label="Amazon"><span class="sq amz">a<svg width="26" height="8" viewBox="0 0 26 8"><path d="M1 1q11 8 22 1M19 1h5l-2 5" fill="none" stroke="#f90" stroke-width="2"/></svg></span></button>
      <button class="active" aria-label="Illustrator"><span class="sq ai">Ai</span></button>
    </nav>
    <div class="tray">
      <svg width="32" height="28" viewBox="0 0 32 28"><path d="M17 3q11 2 13 11-1 12-14 13-9 0-10-6 15 1 11-18z" fill="#f7a92c"/><path d="M3 14q-4-5 2-8 3-6 8-2 6 0 5 6 0 4-3 4zM18 25q-4-4 1-6 3-5 7-1 5 0 5 4 0 3-3 3z" fill="#a9c4f1" stroke="#7f9fd8"/></svg>
      <span class="temp">29°C</span>
      <svg class="t-up" width="16" height="10" viewBox="0 0 16 10"><path d="M1 9l7-7 7 7" fill="none" stroke="#111" stroke-width="1.500"/></svg>
      <svg width="16" height="18" viewBox="0 0 16 18"><path d="M2 4h8v10H2zM10 8l4-2v7l-4-2M3 1h6M3 17h6" fill="none" stroke="#111" stroke-width="1.300"/></svg>
      <svg width="20" height="16" viewBox="0 0 20 16"><path d="M3 14q-4-4 1-7 2-7 8-4 5 1 5 5 4 3 1 6z" fill="#f4f4f4" stroke="#444"/><path d="M3 13q-3-3 1-6 2-7 8-4 4 1 4 4-7 0-9 6z" fill="#888"/></svg>
      <span class="ime">A</span>
      <div class="clock"><span>22:07</span><span>2023/08/06</span></div>
      <button class="notif" aria-label="通知"><svg width="20" height="20" viewBox="0 0 20 20"><path d="M0 0h20v15h-8l-5 5v-5H0z" fill="#111"/><path d="M4 4h12M4 7.500h12M4 11h8" stroke="#fff" stroke-width="1.500"/></svg><em>3</em></button>
    </div>
  </footer>
</body>
</html>
```

FILE: styles.css
```css
* {
  box-sizing: border-box;
}
body {
  margin: 0;
  height: 100vh;
  display: flex;
  flex-direction: column;
  overflow: hidden;
  font-family: "Noto Sans", "Noto Sans CJK JP", sans-serif;
  font-size: 15px;
  line-height: 20px;
  color: #c8c8c8;
  background: #535353;
}
button, input, select {
  font: inherit;
  color: inherit;
  border: 0;
  padding: 0;
  margin: 0;
  background: none;
  min-width: 0;
  border-radius: 0;
}
button {
  display: flex;
  align-items: center;
  justify-content: center;
  white-space: nowrap;
}
svg {
  display: block;
  flex: none;
}
h2, h3, h4 {
  margin: 0;
  font-size: 15px;
  font-weight: 400;
}
i, em {
  font-style: normal;
}
.defs {
  position: absolute;
  width: 0;
  height: 0;
}
.ln {
  fill: none;
  stroke: #c6c6c6;
  stroke-width: 1.6;
}
.ln[stroke-width="3"] {
  stroke-width: 3;
}
.fl {
  fill: #c6c6c6;
}
.shade {
  fill: #737373;
}
.solid {
  fill: #535353;
}
.dim {
  stroke: #999;
}
.cut {
  fill: none;
  stroke: #535353;
  stroke-width: 1.5;
}
.c12 {
  width: 12px;
  height: 12px;
}
.turn {
  transform: rotate(-90deg);
}
.turn-l {
  transform: rotate(90deg);
}

/* メニューバー */
.menubar {
  display: flex;
  align-items: center;
  height: 39px;
  padding-left: 13px;
  border-bottom: 2px solid #404040;
  flex: none;
}
.ai-logo {
  width: 20px;
  height: 19px;
  border-radius: 3px;
  background: #300;
  color: #ff9a00;
  font-size: 12px;
  font-weight: 700;
  line-height: 18px;
  text-align: center;
}
.home {
  margin: 2px 16px 0 17px;
}
.vline {
  width: 2px;
  height: 26px;
  background: #5f5f5f;
}
.menus {
  display: flex;
  gap: 18px;
  margin: 0 13px 8px 20px;
  font-size: 16px;
  color: #e6e6e6;
  font-family: "Noto Sans CJK JP", sans-serif;
}
.menubar-right {
  display: flex;
  align-items: center;
  margin-left: auto;
  color: #c6c6c6;
  align-self: flex-start;
  height: 38px;
}
.share {
  width: 55px;
  height: 30px;
  border-radius: 15px;
  margin-right: 12px;
  background: #1473e6;
  color: #fff;
}
.menubar-right .vline {
  margin: 0 25px 0 15px;
}
.arrange {
  margin-right: 22px;
}
.win-buttons {
  display: flex;
  align-self: flex-start;
  width: 106px;
  height: 24px;
  margin: 0 4px 0 13px;
  border: 1px solid #666;
  border-top: 0;
  border-radius: 0 0 4px 4px;
}
.win-buttons button {
  flex: 1;
}
.win-buttons button + button {
  border-left: 1px solid #5f5f5f;
}

/* コントロールバー */
.controlbar {
  display: flex;
  align-items: center;
  gap: 8px;
  height: 43px;
  padding-left: 5px;
  border-bottom: 2px solid #3f3f3f;
  flex: none;
  white-space: nowrap;
}
.grip-v {
  width: 3px;
  height: 26px;
  background: repeating-linear-gradient(#3a3a3a 0 1px, transparent 1px 3px);
}
.sel-state {
  width: 158px;
  border-right: 1px solid #484848;
  padding-left: 3px;
}
.swatch-drop {
  display: flex;
  height: 26px;
  border: 1px solid #666;
  background: #4a4a4a;
  color: #fff;
}
.swatch-drop button {
  width: 22px;
}
.swatch-drop svg, .bar-field svg, .st-field svg {
  width: 12px;
  height: 12px;
}
.sw {
  width: 24px;
  border: 1px solid #ddd;
}
.sw-white {
  background: #fff;
}
.sw-stroke {
  background: #000;
  display: grid;
  place-items: center;
}
.sw-stroke::before {
  content: "";
  width: 10px;
  height: 10px;
  border: 1px solid #fff;
  background: #fff content-box;
  padding: 2px;
}
.sw-grey {
  background: #ddd;
}
.bar-label {
  margin-right: -5px;
  color: #b0b0b0;
}
.bright {
  color: #eee;
}
.bar-field {
  display: flex;
  height: 26px;
  border: 1px solid #666;
  background: #4a4a4a;
  color: #fff;
}
.bar-field input {
  flex: 1;
  width: 0;
  padding-left: 5px;
  background: #434343;
}
.bar-field button {
  width: 22px;
  flex-direction: column;
}
.w-stroke {
  width: 108px;
  margin-left: 6px;
}
.w-brush {
  width: 134px;
}
.w-opacity {
  width: 97px;
}
.preview {
  flex: 1;
  display: flex;
  align-items: center;
  justify-content: flex-end;
  gap: 8px;
  padding-right: 6px;
  background: #ddd;
  color: #000;
}
.line {
  width: 62px;
  height: 2px;
  background: #000;
}
.dot {
  width: 6px;
  height: 6px;
  border-radius: 50%;
  background: #000;
}
.out-btn {
  height: 26px;
  border: 1px solid #7a7a7a;
  border-radius: 2px;
  color: #fff;
  font-weight: 500;
}
.w-docset {
  width: 145px;
  margin-left: 4px;
}
.w-pref {
  width: 100px;
}
.align-ic {
  width: 40px;
  height: 26px;
  margin-left: 4px;
}
.bar-right {
  display: flex;
  align-items: center;
  margin-left: auto;
  padding-right: 20px;
}
.snap-group {
  display: flex;
  align-items: center;
  gap: 3px;
  margin: 0 24px 0 9px;
  color: #fff;
}
.dark-ic {
  width: 29px;
  height: 29px;
  border-radius: 2px;
  background: #2e2e2e;
}

/* ワークスペース */
.workspace {
  flex: 1;
  display: flex;
  min-height: 0;
}
.doc-area {
  position: relative;
  flex: 1;
  min-width: 0;
  display: flex;
  flex-direction: column;
  border-right: 2px solid #3a3a3a;
}
.doc-tabs {
  display: flex;
  height: 36px;
  background: #424242;
  border-bottom: 1px solid #3a3a3a;
  flex: none;
}
.doc-tabs span {
  padding: 8px 13px;
  background: #505050;
  font-size: 14px;
  color: #ececec;
}
.canvas-row {
  flex: 1;
  display: flex;
  min-height: 0;
}
.canvas {
  position: relative;
  flex: 1;
  background: #5f5f5f;
}
.artboard {
  position: absolute;
  left: 394px;
  top: 300px;
  bottom: 0;
  width: 788px;
  background: #fff;
  border: 1px solid #000;
  border-width: 0 1px;
}
.canvas-scroll {
  width: 20px;
  display: flex;
  flex-direction: column;
  align-items: center;
  justify-content: space-between;
  padding: 5px 0;
  background: #4a4a4a;
}
.statusbar {
  display: flex;
  align-items: flex-start;
  height: 21px;
  padding-left: 5px;
  overflow: hidden;
  border-bottom: 2px solid #3a3a3a;
  background: #4f4f4f;
  font-size: 14px;
  flex: none;
}
.st-field {
  display: flex;
  height: 26px;
  border: 1px solid #636363;
  background: #4b4b4b;
  color: #eee;
}
.st-field input {
  flex: 1;
  width: 0;
  padding-left: 4px;
  background: #424242;
}
.st-field button {
  width: 20px;
}
.w-zoom {
  width: 85px;
}
.w-rot {
  width: 85px;
  margin-left: 7px;
}
.w-page {
  width: 73px;
}
.nav-ic {
  width: 34px;
  height: 14px;
  margin: 5px 9px;
}
.st-tool {
  width: 253px;
  padding-top: 3px;
  border: 1px solid #484848;
  border-width: 0 1px;
  text-align: center;
}
.st-play {
  width: 10px;
  height: 12px;
  margin: 6px 6px;
}
.hscroll {
  flex: 1;
  display: flex;
  justify-content: space-between;
  align-items: center;
  height: 19px;
  padding: 0 24px 0 2px;
  background: #4a4a4a;
}
.hscroll i {
  width: 32px;
  height: 18px;
  border-radius: 9px;
  background: #626262;
}

/* ツールパネル */
.tools {
  position: absolute;
  left: 0;
  top: 123px;
  width: 75px;
  height: 679px;
  display: flex;
  flex-direction: column;
  align-items: flex-start;
  background: #535353;
  border: 1px solid #3a3a3a;
  border-left: 0;
  box-shadow: 2px 2px 5px #0003;
}
.tools-head {
  display: flex;
  align-items: center;
  justify-content: flex-end;
  gap: 13px;
  width: 100%;
  height: 17px;
  padding-right: 6px;
  background: #424242;
  color: #ddd;
  flex: none;
}
.grip {
  display: block;
  width: 24px;
  height: 5px;
  flex: none;
  background: repeating-linear-gradient(90deg, #3a3a3a 0 1px, transparent 1px 3px);
}
.tools .grip {
  margin: 3px 0 16px 18px;
}
.tool-grid {
  display: grid;
  grid-template-columns: 28px 28px;
  column-gap: 9px;
  padding-bottom: 3px;
  border-bottom: 1px solid #484848;
}
.tool-grid svg {
  width: 28px;
  height: 30px;
}
.fill-stroke {
  margin-top: 3px;
}
.mode-row {
  display: flex;
  margin-top: 4px;
  height: 25px;
  border: 1px solid #616161;
  border-left: 0;
}
.mode-row button {
  width: 25px;
  border-right: 1px solid #616161;
}
.mode-row button:first-child {
  width: 16px;
  justify-content: flex-end;
  padding-right: 3px;
}
.mode-row button:last-child {
  border: 0;
}
.mode-row .on {
  background: #2e2e2e;
}
.chip {
  width: 17px;
  height: 17px;
  border: 2px solid #000;
  background: #fff;
}
.mode-row button:first-child .chip {
  width: 13px;
  border-left: 0;
}
.grad {
  background: linear-gradient(90deg, #fff, #444);
}
.none {
  background: linear-gradient(-45deg, #fff 38%, #e00 38% 62%, #fff 62%);
}
.draw {
  margin-top: 6px;
}
.screen-mode {
  margin: 10px 0 0 16px;
}
.more {
  margin: 25px 0 0 21px;
}

/* スウォッチパネル */
.swatches {
  position: absolute;
  right: 0;
  top: 98px;
  width: 300px;
  height: 531px;
  display: flex;
  flex-direction: column;
  background: #535353;
  border-top: 5px solid #333;
  border-bottom: 1px solid #3a3a3a;
}
.swatches::after {
  content: "";
  height: 10px;
  border-top: 2px solid #3a3a3a;
}
.sw-tabs {
  display: flex;
  align-items: center;
  justify-content: flex-end;
  height: 34px;
  padding-right: 7px;
  background: #424242;
  border-bottom: 1px solid #3a3a3a;
  color: #a8a8a8;
  font-size: 14px;
  font-feature-settings: "palt";
}
.sw-tabs span {
  padding-right: 3px;
}
.sw-tabs .cut-tab {
  height: 33px;
  margin-right: 20px;
  padding: 6px 0 0 9px;
  border-left: 1px solid #3a3a3a;
  font-size: 13px;
  white-space: nowrap;
}
.sw-tabs i {
  width: 1px;
  height: 14px;
  margin: 0 9px 0 7px;
  background: #aaa;
}
.sw-view {
  display: flex;
  align-self: flex-end;
  height: 30px;
  margin: 8px 7px 13px 0;
  border: 1px solid #666;
}
.sw-view button {
  width: 29px;
}
.sw-view .on {
  background: #2e2e2e;
}
.sw-list {
  flex: 1;
  margin-right: 6px;
  padding: 1px 24px 0 0;
  border: 1px solid #616161;
}
.sw-grid {
  display: grid;
  grid-template-columns: repeat(8, 1fr);
  grid-auto-rows: 17px;
  gap: 1px;
  width: 139px;
  margin-left: auto;
}
.greys {
  margin-top: 19px;
}
.c-navy { background: #1b1e7c; }
.c-magenta { background: #e4007f; }
.c-red { background: #c30d23; }
.c-vermilion { background: #e73828; }
.c-orange { background: #e85513; }
.c-amber { background: #f39800; }
.c-yellow { background: #f8b62d; }
.c-cyan { background: #2ea7d8; }
.c-blue { background: #0b6fb8; }
.c-royal { background: #102a8c; }
.c-indigo { background: #181a60; }
.c-violet { background: #5f1985; }
.c-purple { background: #920783; }
.c-wine { background: #a40b5d; }
.c-tan { background: #956134; }
.c-brown { background: #7f4f21; }
.c-umber { background: #6a3906; }
.c-cocoa { background: #42210b; }
.c-bw { background: linear-gradient(90deg, #fff, #222); }
.c-fire { background: linear-gradient(90deg, #ffe100, #f9a51a 60%, #e8552d); }
.c-sky { background: linear-gradient(110deg, #2c86c8, #e4f0f8); }
.c-g1 { background: #c8c8c8; }
.c-g2 { background: #dcdcdc; }
.c-g3 { background: #efefef; }
.c-g4 { background: #f7f8f8; }
.sw-foot {
  display: flex;
  align-items: center;
  justify-content: flex-end;
  gap: 18px;
  height: 25px;
  padding-right: 34px;
}

/* アイコンドック */
.dock {
  width: 51px;
  background: #535353;
  border-right: 2px solid #3a3a3a;
}
.dock-top, .props-top {
  display: flex;
  align-items: center;
  justify-content: flex-end;
  height: 15px;
  padding-right: 6px;
  background: #424242;
  border-bottom: 1px solid #333;
  color: #ddd;
}
.dock-group {
  display: flex;
  flex-direction: column;
  align-items: center;
  gap: 7px;
  padding: 4px 0 5px;
  border-bottom: 2px solid #3a3a3a;
}
.dock-group button {
  width: 34px;
  height: 28px;
}
.dock-group svg {
  width: 24px;
  height: 22px;
}
.dock .on {
  background: #2e2e2e;
}

/* プロパティパネル */
.props {
  width: 314px;
  flex: none;
  border-right: 2px solid #444;
}
.props-tabs {
  display: flex;
  height: 34px;
  background: #424242;
  border-bottom: 1px solid #3a3a3a;
  font-size: 14px;
  font-feature-settings: "palt";
  color: #aaa;
}
.props-tabs button {
  width: 98px;
}
.props-tabs .on {
  width: 76px;
  height: 34px;
  background: #535353;
  color: #fff;
}
.props-row {
  display: flex;
  align-items: center;
  height: 47px;
  margin-right: 14px;
  padding-left: 13px;
  border-bottom: 1px solid #484848;
}
.props-row span {
  white-space: nowrap;
}
.props h3 {
  padding-left: 13px;
}
.r-state {
  height: 41px;
}
.props-doc {
  display: flex;
  flex-direction: column;
  gap: 10px;
  margin-right: 14px;
  height: 165px;
  padding-top: 15px;
  border-bottom: 1px solid #484848;
}
.props-doc h3 {
  margin-bottom: 4px;
}
.form-row {
  display: flex;
  align-items: center;
  height: 26px;
}
.form-row label, .lab {
  width: 109px;
  flex: none;
  text-align: right;
  white-space: nowrap;
}
.select {
  display: grid;
  align-items: center;
  height: 26px;
  border: 1px solid #666;
  border-radius: 2px;
  background: #464646;
  color: #fff;
}
.select select {
  grid-area: 1 / 1;
  width: 100%;
  height: 100%;
  padding-left: 7px;
  appearance: none;
}
.select svg {
  grid-area: 1 / 1;
  justify-self: end;
  width: 14px;
  height: 14px;
  margin-right: 4px;
  pointer-events: none;
}
.w-unit {
  width: 167px;
}
.w-board {
  width: 93px;
}
.w-board svg {
  width: 22px;
  height: 24px;
  margin-right: 0;
  padding: 6px 4px;
  border-left: 1px solid #5c5c5c;
}
.step {
  width: 8px;
  height: 12px;
  margin-left: 18px;
  color: #777;
}
.w-edit {
  width: 166px;
}
.rulers svg {
  margin-left: 15px;
}
.rulers span {
  width: 103px;
}
.sm {
  width: 27px;
  height: 27px;
}
.guides span {
  width: 108px;
}
.plain-ic {
  width: 48px;
}
.snaps span {
  width: 143px;
}
.props-pref {
  height: 187px;
  margin-right: 14px;
  padding-top: 14px;
  border-bottom: 1px solid #484848;
}
.key-row {
  display: flex;
  align-items: center;
  margin: 11px 0 12px 13px;
}
.key-row label {
  width: 79px;
  white-space: nowrap;
}
.key-row input {
  width: 75px;
  height: 26px;
  padding-left: 5px;
  border: 1px solid #636363;
  background: #434343;
  color: #fff;
}
.check {
  display: flex;
  align-items: center;
  gap: 4px;
  height: 30px;
  padding-left: 16px;
}
.check input {
  width: 16px;
  height: 16px;
  appearance: none;
  border: 1px solid #c8c8c8;
  border-radius: 2px;
  display: grid;
  place-items: center;
}
.check input:checked {
  background: #c8c8c8;
}
.check input:checked::before {
  content: "";
  width: 5px;
  height: 9px;
  border: solid #333;
  border-width: 0 2px 2px 0;
  transform: rotate(45deg);
}
.props-quick {
  padding: 20px 16px 0 13px;
}
.props-quick h3 {
  padding: 0;
  margin-bottom: 14px;
}
.props-quick .out-btn {
  width: 100%;
  margin-bottom: 12px;
}

/* ダイアログ */
.dialog {
  position: absolute;
  left: 285px;
  top: 61px;
  width: 1125px;
  height: 680px;
  display: flex;
  flex-direction: column;
  background: #323232;
  box-shadow: 0 3px 14px #0008;
  font-feature-settings: "palt";
}
.dialog h2 {
  font-size: 14px;
}
.dlg-title {
  display: flex;
  align-items: center;
  justify-content: space-between;
  height: 37px;
  padding: 0 14px 2px 9px;
  background: #fff;
  color: #000;
  font-size: 13px;
}
.dlg-tabs {
  display: flex;
  gap: 26px;
  height: 60px;
  padding-left: 33px;
  border-bottom: 2px solid #3e3e3e;
  font-size: 16px;
  color: #b4b4b4;
}
.dlg-tabs button {
  height: 60px;
  gap: 7px;
  border-bottom: 3px solid transparent;
}
.dlg-tabs .on {
  color: #fff;
  border-color: #fff;
}
.dlg-body {
  flex: 1;
  display: flex;
  min-height: 0;
}
.recent {
  flex: 1;
  display: flex;
  flex-direction: column;
  background: #252525;
}
.recent-scroll {
  display: flex;
  height: 483px;
  overflow: hidden;
}
.recent-main {
  flex: 1;
  padding: 22px 0 0 33px;
}
.recent h2 {
  margin-bottom: 18px;
}
.cards {
  display: grid;
  grid-template-columns: repeat(3, 210px);
  grid-auto-rows: 210px;
  gap: 16px;
}
.card {
  flex-direction: column;
  border-radius: 4px;
  background: #3e3e3e;
  color: #b8b8b8;
  font-size: 13px;
  padding-top: 17px;
}
.card svg {
  width: 60px;
  height: 72px;
  margin-bottom: 22px;
}
.card b {
  font-weight: 400;
  font-size: 14px;
  color: #ddd;
  line-height: 24px;
}
.card.on {
  outline: 4px solid #2d7fe0;
  outline-offset: -4px;
}
.card.on b {
  color: #fff;
}
.vscroll {
  width: 15px;
  display: flex;
  flex-direction: column;
  align-items: center;
  margin-top: 5px;
  padding: 2px 0;
  background: #4a4a4a;
  color: #999;
}
.vscroll i {
  width: 13px;
  border-radius: 6px;
  margin: 1px 0 auto;
  background: #5f5f5f;
}
.thumb-l {
  height: 291px;
}
.thumb-r {
  height: 249px;
}
.stock {
  display: flex;
  align-items: center;
  height: 72px;
  margin: 9px 32px 0 33px;
  padding-left: 99px;
  background: #2e2e2e;
  color: #eee;
}
.stock input {
  width: 340px;
  height: 38px;
  margin: 0 13px 0 10px;
  padding-left: 7px;
  border-bottom: 1px solid #484848;
  font-feature-settings: normal;
}
.stock input::placeholder {
  color: #5c5c5c;
}
.pill {
  width: 90px;
  height: 40px;
  border: 2px solid #e0e0e0;
  border-radius: 20px;
  color: #eee;
  font-size: 17px;
  font-weight: 500;
}
.primary {
  background: #1473e6;
  border-color: #1473e6;
  color: #fff;
  font-weight: 700;
}
.preset {
  width: 388px;
  display: flex;
  flex-direction: column;
}
.preset h2 {
  padding: 20px 0 11px 26px;
  color: #b0b0b0;
}
.preset-scroll {
  display: flex;
  justify-content: space-between;
  height: 432px;
  padding-left: 26px;
  overflow: hidden;
}
.preset-scroll .vscroll {
  margin-top: 0;
}
.fields {
  width: 337px;
  color: #b0b0b0;
  font-size: 14px;
}
.doc-name {
  display: block;
  width: 100%;
  height: 42px;
  margin-bottom: 13px;
  padding: 0 0 2px 8px;
  border-bottom: 2px solid #484848;
  font-size: 15px;
  color: #eee;
}
.fl-label {
  display: block;
  height: 20px;
  margin-bottom: 6px;
}
.frow {
  display: flex;
  gap: 15px;
}
.three {
  margin: 12px 0 10px;
}
.box {
  display: block;
  width: 110px;
  height: 40px;
  padding: 0 0 2px 11px;
  border: 1px solid #4a4a4a;
  border-radius: 4px;
  background: #252525;
  color: #eee;
  font-size: 15px;
}
.focus {
  border-color: #3b8ded;
}
.dlg-select {
  flex: 1;
  height: 40px;
  border-color: #4a4a4a;
  border-radius: 4px;
  background: #2d2d2d;
  color: #ddd;
  font-size: 17px;
}
.dlg-select select {
  padding-left: 15px;
}
.dlg-select svg {
  width: 18px;
  height: 18px;
  margin-right: 12px;
}
.orient {
  display: flex;
  align-items: center;
  gap: 8px;
  height: 40px;
}
.spin {
  display: flex;
  width: 110px;
  height: 40px;
  border: 1px solid #4a4a4a;
  border-radius: 4px;
  overflow: hidden;
  font-size: 15px;
}
.spin span {
  width: 25px;
  border-right: 1px solid #4a4a4a;
}
.spin button {
  width: 24px;
  height: 19px;
}
.spin button:disabled {
  background: #3e3e3e;
  color: #5c5c5c;
}
.spin svg {
  width: 14px;
  height: 14px;
}
.spin input {
  flex: 1;
  width: 0;
  padding: 0 0 2px 11px;
  background: #252525;
  color: #eee;
}
.wide {
  width: 125px;
}
.fields h4 {
  margin-bottom: 11px;
  font-size: 14px;
}
.bleed {
  display: flex;
  align-items: center;
  gap: 17px;
}
.bleed-grid {
  display: grid;
  grid-template-columns: 110px 110px;
  gap: 5px 15px;
}
.bleed .fl-label {
  font-size: 14px;
}
.link {
  width: 40px;
  height: 40px;
  margin-top: 24px;
  border: 1px solid #4a4a4a;
  border-radius: 4px;
  background: #3a3a3a;
}
.advanced {
  gap: 3px;
  margin: 12px 0 6px;
  font-size: 14px;
}
.advanced svg {
  width: 16px;
  height: 16px;
}
.dlg-foot {
  display: flex;
  justify-content: flex-end;
  gap: 20px;
  padding: 25px 25px 0 0;
}

/* タスクバー */
.taskbar {
  display: flex;
  height: 50px;
  flex: none;
  background: linear-gradient(90deg, #dbe1ee, #d2daea 50%, #d8e0ec);
  color: #111;
}
.start {
  width: 60px;
}
.tsearch {
  display: flex;
  align-items: center;
  width: 359px;
  margin-top: 1px;
  padding-left: 14px;
  border: 1px solid #bbb;
  background: #fff;
}
.tsearch input {
  flex: 1;
  padding-left: 12px;
  font-size: 17px;
  font-feature-settings: "palt";
}
.tsearch input::placeholder {
  color: #333;
}
.dome {
  align-self: flex-end;
}
.apps {
  display: flex;
}
.apps button {
  width: 62px;
  height: 50px;
}
.apps .run {
  background: linear-gradient(#0a72cc, #0a72cc) center bottom / 50px 3px no-repeat;
}
.apps .active {
  background: #eef3fb;
  border-bottom: 3px solid #0a72cc;
}
.sq {
  width: 30px;
  height: 30px;
  border-radius: 5px;
  font-size: 15px;
  font-weight: 700;
  line-height: 28px;
}
.ps {
  background: #001e36;
  color: #31a8ff;
}
.xd {
  background: #470137;
  color: #ff61f6;
}
.ai {
  background: #300;
  color: #ff9a00;
}
.amz {
  background: #fff;
  font-size: 26px;
  line-height: 20px;
}
.amz svg {
  margin-left: 2px;
}
.tray {
  display: flex;
  align-items: center;
  margin-left: auto;
  padding-right: 5px;
  gap: 10px;
}
.temp {
  font-size: 17px;
  margin-right: 20px;
}
.t-up {
  margin-right: 6px;
}
.ime {
  font-size: 22px;
}
.clock {
  display: flex;
  flex-direction: column;
  align-items: center;
  margin-left: 3px;
  font-size: 14px;
  line-height: 23px;
}
.notif {
  position: relative;
  width: 60px;
  height: 50px;
  border-right: 1px solid #b5bccb;
  padding-right: 8px;
}
.notif em {
  position: absolute;
  left: 26px;
  top: 26px;
  width: 20px;
  height: 20px;
  border: 1px solid #777;
  border-radius: 50%;
  background: #dcdcdc;
  font-size: 14px;
  line-height: 18px;
}
```
